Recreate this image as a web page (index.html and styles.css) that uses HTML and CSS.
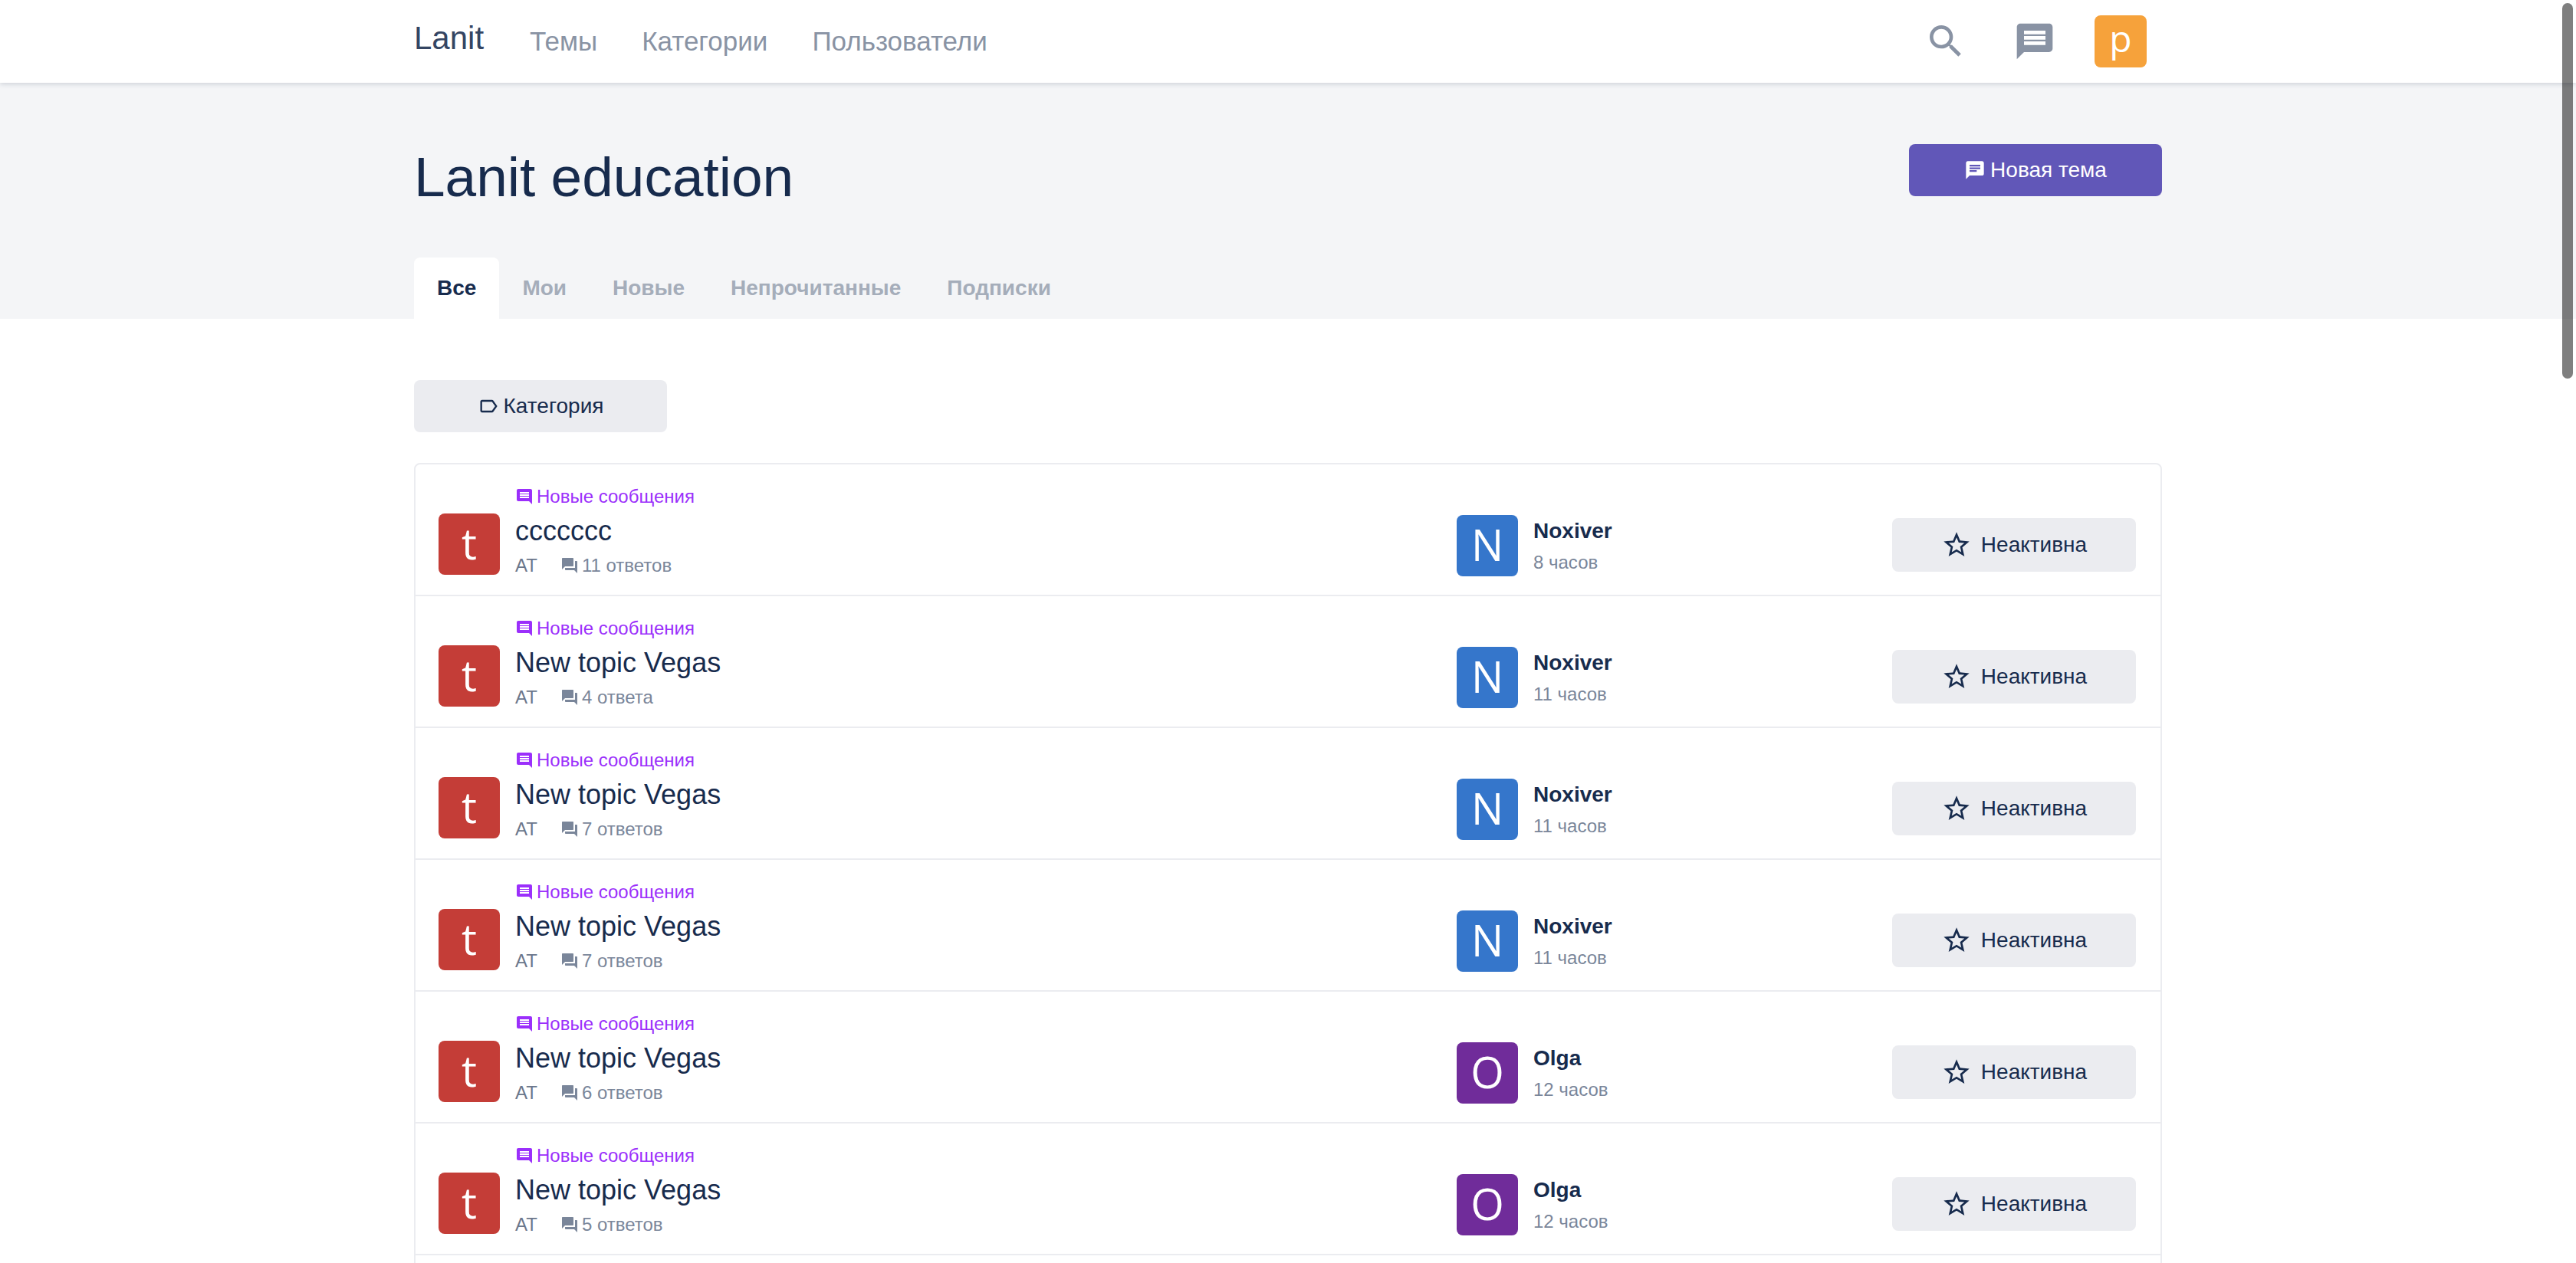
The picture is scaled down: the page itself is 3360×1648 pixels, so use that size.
FILE: index.html
```html
<!DOCTYPE html>
<html lang="ru">
<head>
<meta charset="utf-8">
<meta name="viewport" content="width=device-width, initial-scale=1">
<title>Lanit education</title>
<link rel="stylesheet" href="styles.css">
</head>
<body>
<svg class="sprite" aria-hidden="true">
  <symbol id="i-search" viewBox="0 0 24 24"><path d="M15.5 14h-.79l-.28-.27C15.41 12.59 16 11.11 16 9.5 16 5.91 13.09 3 9.5 3S3 5.91 3 9.5 5.91 16 9.5 16c1.61 0 3.09-.59 4.23-1.57l.27.28v.79l5 4.99L20.49 19l-4.99-5zm-6 0C7.01 14 5 11.99 5 9.5S7.01 5 9.5 5 14 7.01 14 9.5 11.99 14 9.5 14z"/></symbol>
  <symbol id="i-message" viewBox="0 0 24 24"><path d="M20 2H4c-1.1 0-1.99.9-1.99 2L2 22l4-4h14c1.1 0 2-.9 2-2V4c0-1.1-.9-2-2-2zm-2 12H6v-2h12v2zm0-3H6V9h12v2zm0-3H6V6h12v2z"/></symbol>
  <symbol id="i-chat" viewBox="0 0 24 24"><path d="M20 2H4c-1.1 0-1.99.9-1.99 2L2 22l4-4h14c1.1 0 2-.9 2-2V4c0-1.1-.9-2-2-2zM6 9h12v2H6V9zm8 5H6v-2h8v2zm4-6H6V6h12v2z"/></symbol>
  <symbol id="i-label" viewBox="0 0 24 24"><path d="M17.63 5.84C17.27 5.33 16.67 5 16 5L5 5.01C3.9 5.01 3 5.9 3 7v10c0 1.1.9 1.99 2 1.99L16 19c.67 0 1.27-.33 1.63-.84L22 12l-4.37-6.16zM16 17H5V7h11l3.55 5L16 17z"/></symbol>
  <symbol id="i-comment" viewBox="0 0 24 24"><path d="M21.99 4c0-1.1-.89-2-1.99-2H4c-1.1 0-2 .9-2 2v12c0 1.1.9 2 2 2h14l4 4-.01-18zM18 14H6v-2h12v2zm0-3H6V9h12v2zm0-3H6V6h12v2z"/></symbol>
  <symbol id="i-forum" viewBox="0 0 24 24"><path d="M21 6h-2v9H6v2c0 .55.45 1 1 1h11l4 4V7c0-.55-.45-1-1-1zm-4 6V3c0-.55-.45-1-1-1H3c-.55 0-1 .45-1 1v14l4-4h10c.55 0 1-.45 1-1z"/></symbol>
  <symbol id="i-star" viewBox="0 0 24 24"><path d="M22 9.24l-7.19-.62L12 2 9.19 8.63 2 9.24l5.46 4.73L5.82 21 12 17.27 18.18 21l-1.63-7.03L22 9.24zM12 15.4l-3.76 2.27 1-4.28-3.32-2.88 4.38-.38L12 6.1l1.71 4.04 4.38.38-3.32 2.88 1 4.28L12 15.4z"/></symbol>
</svg>

<header class="topbar">
  <div class="container topbar-inner">
    <a class="brand" href="#">Lanit</a>
    <nav class="nav">
      <a href="#">Темы</a>
      <a href="#">Категории</a>
      <a href="#">Пользователи</a>
    </nav>
    <div class="tools">
      <button class="icon-button" type="button" aria-label="Поиск"><svg class="icon-lg"><use href="#i-search"/></svg></button>
      <button class="icon-button" type="button" aria-label="Сообщения"><svg class="icon-lg"><use href="#i-message"/></svg></button>
      <button class="avatar avatar-small orange" type="button">p</button>
    </div>
  </div>
</header>

<section class="hero">
  <div class="container hero-inner">
    <div class="hero-head">
      <h1>Lanit education</h1>
      <button class="button primary" type="button"><svg class="icon-md"><use href="#i-chat"/></svg>Новая тема</button>
    </div>
    <nav class="tabs">
      <a class="active" href="#">Все</a>
      <a href="#">Мои</a>
      <a href="#">Новые</a>
      <a href="#">Непрочитанные</a>
      <a href="#">Подписки</a>
    </nav>
  </div>
</section>

<main class="container main">
  <button class="button" type="button"><svg class="icon-md"><use href="#i-label"/></svg>Категория</button>
  <ul class="topics">
    <li class="topic">
      <span class="avatar red">t</span>
      <div class="info">
        <a class="unread" href="#"><svg class="icon-sm"><use href="#i-comment"/></svg>Новые сообщения</a>
        <a class="title" href="#">ccccccc</a>
        <div class="meta"><a class="category" href="#">AT</a><span class="replies"><svg class="icon-sm"><use href="#i-forum"/></svg>11 ответов</span></div>
      </div>
      <div class="last"><span class="avatar blue">N</span><div class="poster"><a class="name" href="#">Noxiver</a><span class="time">8 часов</span></div></div>
      <button class="button follow" type="button"><svg class="icon-star"><use href="#i-star"/></svg>Неактивна</button>
    </li>
    <li class="topic">
      <span class="avatar red">t</span>
      <div class="info">
        <a class="unread" href="#"><svg class="icon-sm"><use href="#i-comment"/></svg>Новые сообщения</a>
        <a class="title" href="#">New topic Vegas</a>
        <div class="meta"><a class="category" href="#">AT</a><span class="replies"><svg class="icon-sm"><use href="#i-forum"/></svg>4 ответа</span></div>
      </div>
      <div class="last"><span class="avatar blue">N</span><div class="poster"><a class="name" href="#">Noxiver</a><span class="time">11 часов</span></div></div>
      <button class="button follow" type="button"><svg class="icon-star"><use href="#i-star"/></svg>Неактивна</button>
    </li>
    <li class="topic">
      <span class="avatar red">t</span>
      <div class="info">
        <a class="unread" href="#"><svg class="icon-sm"><use href="#i-comment"/></svg>Новые сообщения</a>
        <a class="title" href="#">New topic Vegas</a>
        <div class="meta"><a class="category" href="#">AT</a><span class="replies"><svg class="icon-sm"><use href="#i-forum"/></svg>7 ответов</span></div>
      </div>
      <div class="last"><span class="avatar blue">N</span><div class="poster"><a class="name" href="#">Noxiver</a><span class="time">11 часов</span></div></div>
      <button class="button follow" type="button"><svg class="icon-star"><use href="#i-star"/></svg>Неактивна</button>
    </li>
    <li class="topic">
      <span class="avatar red">t</span>
      <div class="info">
        <a class="unread" href="#"><svg class="icon-sm"><use href="#i-comment"/></svg>Новые сообщения</a>
        <a class="title" href="#">New topic Vegas</a>
        <div class="meta"><a class="category" href="#">AT</a><span class="replies"><svg class="icon-sm"><use href="#i-forum"/></svg>7 ответов</span></div>
      </div>
      <div class="last"><span class="avatar blue">N</span><div class="poster"><a class="name" href="#">Noxiver</a><span class="time">11 часов</span></div></div>
      <button class="button follow" type="button"><svg class="icon-star"><use href="#i-star"/></svg>Неактивна</button>
    </li>
    <li class="topic">
      <span class="avatar red">t</span>
      <div class="info">
        <a class="unread" href="#"><svg class="icon-sm"><use href="#i-comment"/></svg>Новые сообщения</a>
        <a class="title" href="#">New topic Vegas</a>
        <div class="meta"><a class="category" href="#">AT</a><span class="replies"><svg class="icon-sm"><use href="#i-forum"/></svg>6 ответов</span></div>
      </div>
      <div class="last"><span class="avatar purple">O</span><div class="poster"><a class="name" href="#">Olga</a><span class="time">12 часов</span></div></div>
      <button class="button follow" type="button"><svg class="icon-star"><use href="#i-star"/></svg>Неактивна</button>
    </li>
    <li class="topic">
      <span class="avatar red">t</span>
      <div class="info">
        <a class="unread" href="#"><svg class="icon-sm"><use href="#i-comment"/></svg>Новые сообщения</a>
        <a class="title" href="#">New topic Vegas</a>
        <div class="meta"><a class="category" href="#">AT</a><span class="replies"><svg class="icon-sm"><use href="#i-forum"/></svg>5 ответов</span></div>
      </div>
      <div class="last"><span class="avatar purple">O</span><div class="poster"><a class="name" href="#">Olga</a><span class="time">12 часов</span></div></div>
      <button class="button follow" type="button"><svg class="icon-star"><use href="#i-star"/></svg>Неактивна</button>
    </li>
    <li class="topic"></li>
  </ul>
</main>
<div class="scroll-thumb" aria-hidden="true"></div>
</body>
</html>
```
FILE: styles.css
```css
* {
  box-sizing: border-box;
}

html {
  scrollbar-width: none;
}

body {
  margin: 0;
  overflow-x: hidden;
  background: #fff;
  color: #172b4d;
  font-family: "Liberation Sans", Arial, Helvetica, sans-serif;
  font-size: 28px;
}

a {
  color: inherit;
  text-decoration: none;
}

button {
  border: 0;
  font: inherit;
  color: inherit;
  cursor: pointer;
}

svg {
  display: block;
  flex: none;
  fill: currentColor;
}

.sprite {
  position: absolute;
  width: 0;
  height: 0;
}

.icon-sm {
  width: 24px;
  height: 24px;
}

.icon-md {
  width: 28px;
  height: 28px;
}

.icon-star {
  width: 40px;
  height: 40px;
}

.icon-lg {
  width: 56px;
  height: 56px;
}

.container {
  width: 100%;
  max-width: 2280px;
  margin: 0 auto;
}

.topbar {
  position: relative;
  background: #fff;
  box-shadow: 0 2px 6px rgba(23, 43, 77, 0.16);
}

.topbar-inner {
  display: flex;
  align-items: center;
  min-height: 108px;
  padding-right: 20px;
}

.brand {
  padding-bottom: 8px;
  color: #344563;
  font-size: 42px;
  line-height: 48px;
}

.nav {
  display: flex;
  gap: 58px;
  margin-left: 60px;
  color: #8993a4;
  font-size: 35px;
  line-height: 40px;
}

.tools {
  display: flex;
  align-items: center;
  gap: 60px;
  margin-left: auto;
  color: #8993a4;
}

.tools .avatar {
  margin-left: -10px;
}

.icon-button {
  padding: 0;
  background: none;
}

.avatar {
  display: flex;
  flex: none;
  align-items: center;
  justify-content: center;
  width: 80px;
  height: 80px;
  padding: 0;
  border-radius: 8px;
  color: #fff;
  font-family: "Open Sans", sans-serif;
  font-size: 56px;
  font-weight: 400;
  line-height: 76px;
  padding-bottom: 4px;
}

.avatar-small {
  width: 68px;
  height: 68px;
  padding-bottom: 8px;
  font-size: 48px;
  line-height: 60px;
}

.orange {
  background: #f6a23b;
}

.red {
  background: #c43d37;
}

.blue {
  background: #3576cb;
}

.purple {
  background: #702c9a;
}

.hero {
  background: #f4f5f7;
}

.hero-inner {
  display: flex;
  flex-direction: column;
  justify-content: space-between;
  min-height: 308px;
  padding-top: 76px;
}

.hero-head {
  display: flex;
  align-items: flex-start;
  justify-content: space-between;
}

h1 {
  margin: 0;
  font-size: 73px;
  font-weight: 400;
  line-height: 94px;
}

.button {
  display: flex;
  align-items: center;
  justify-content: center;
  gap: 6px;
  width: 330px;
  height: 68px;
  margin: 4px 0 0;
  padding: 0;
  border-radius: 8px;
  background: #ebecf0;
  font-size: 28px;
}

.primary {
  background: #6157b8;
  color: #fff;
}

.tabs {
  display: flex;
  color: #a5adba;
  font-weight: 700;
  line-height: 80px;
}

.tabs a {
  padding: 0 30px;
}

.tabs .active {
  border-radius: 8px 8px 0 0;
  background: #fff;
  color: #172b4d;
}

.main {
  padding-top: 76px;
}

.topics {
  margin: 40px 0 0;
  padding: 0;
  border: 2px solid #ebecf0;
  border-radius: 8px;
  list-style: none;
}

.topic {
  display: flex;
  align-items: flex-start;
  min-height: 172px;
  padding: 24px 32px 20px 30px;
  border-bottom: 2px solid #ebecf0;
}

.topic > .avatar {
  margin-top: 40px;
}

.info {
  display: flex;
  flex: 1;
  flex-direction: column;
  align-items: flex-start;
  margin-left: 20px;
}

.unread,
.replies {
  display: flex;
  align-items: center;
  gap: 4px;
}

.unread {
  color: #9b2ffb;
  font-size: 24px;
  line-height: 36px;
}

.title {
  font-size: 36px;
  line-height: 54px;
}

.meta {
  display: flex;
  gap: 30px;
  color: #7a869a;
  font-size: 24px;
  line-height: 36px;
}

.category {
  color: #6b778c;
}

.last {
  display: flex;
  gap: 20px;
  width: 568px;
  margin-top: 42px;
}

.poster {
  display: flex;
  flex-direction: column;
}

.name {
  font-weight: 700;
  line-height: 42px;
}

.time {
  color: #7a869a;
  font-size: 24px;
  line-height: 40px;
}

.follow {
  gap: 12px;
  width: 318px;
  height: 70px;
  margin-top: 46px;
}

.scroll-thumb {
  position: fixed;
  top: 4px;
  right: 4px;
  width: 14px;
  height: 490px;
  border-radius: 7px;
  background: rgba(0, 0, 0, 0.5);
}
```
